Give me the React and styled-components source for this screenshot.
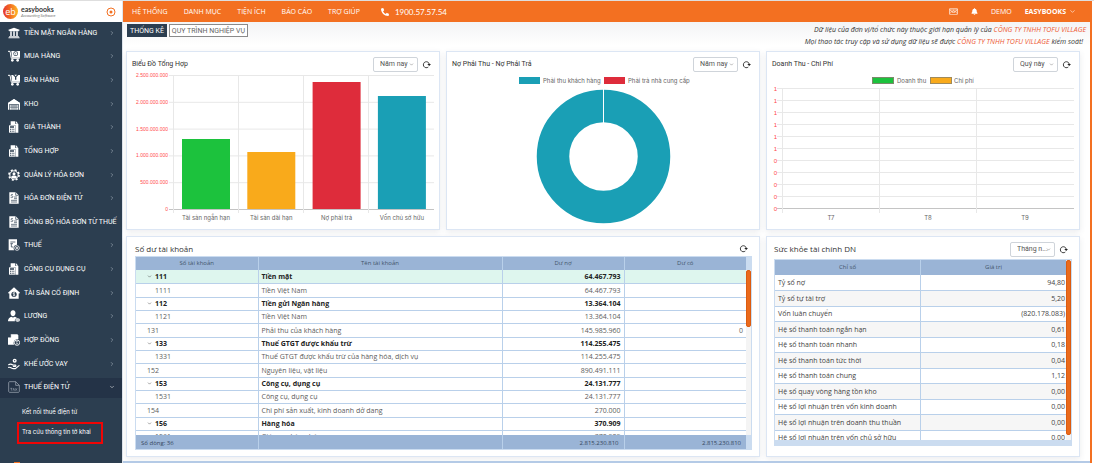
import React from "react";
import styled, { createGlobalStyle, css } from "styled-components";
import { FaUniversity, FaPhoneAlt, FaBell, FaRegKeyboard } from "react-icons/fa";
import { FiChevronDown, FiChevronRight } from "react-icons/fi";

const color = {
  navy: "#2c3e50",
  navyDark: "#243347",
  orange: "#f37021",
  frame: "#dce6f4",
  line: "#b9d0ea",
  head: "#9ab4d6",
  pale: "#cbdcf0",
  green: "#1cc23d",
  amber: "#f9aa1b",
  red: "#de2c3b",
  teal: "#1a9fb5",
};

const font = {
  narrow: 'Roboto, "Open Sans", sans-serif',
  small: 'Inter, "Open Sans", sans-serif',
  brand: 'Lato, "Open Sans", sans-serif',
};

const Global = createGlobalStyle`
  *, *::before, *::after { box-sizing: border-box; }
  body {
    margin: 0;
    background: #fff;
    font-family: "Open Sans", "Noto Sans", sans-serif;
    font-size: 7px;
    line-height: 10px;
    color: #444;
  }
  a { color: inherit; text-decoration: none; }
  button, select { font: inherit; }
`;

const Page = styled.div`
  display: flex;
  min-height: 462px;
  border-top: 1px solid #dedede;
  overflow: hidden;
`;

/* ---------- sidebar ---------- */

const Sidebar = styled.aside`
  flex: 0 0 123px;
  min-width: 0;
  display: flex;
  flex-direction: column;
  background: ${color.navy};
  border-right: 1px solid #dfe5ec;
  color: #fff;
`;

const Brand = styled.div`
  display: flex;
  align-items: center;
  gap: 3px;
  height: 21px;
  padding: 0 6px 0 3px;
  background: #fff;
`;

const BrandMark = styled.span`
  display: grid;
  place-items: center;
  width: 15px;
  height: 15px;
  border-radius: 50%;
  background: linear-gradient(90deg, #e5352f, #f37021 50%, #fdb827);
  color: #fff;
  font-size: 9px;
  line-height: 12px;
`;

const BrandText = styled.span`
  flex: 1;
  display: flex;
  flex-direction: column;
  color: #333;
  font-family: ${font.brand};
  font-weight: 700;
  font-size: 7px;
  line-height: 7px;
`;

const BrandSub = styled.small`
  font-size: 4px;
  line-height: 5px;
  font-weight: 400;
  font-style: italic;
  color: #777;
  white-space: nowrap;
`;

const PinButton = styled.button`
  display: grid;
  padding: 0;
  border: 0;
  background: none;
`;

const Nav = styled.nav`
  display: grid;
  grid-template-columns: minmax(0, 1fr);
  grid-auto-rows: 1fr;
  height: 378px;
  font-family: ${font.narrow};
`;

const NavItem = styled.a`
  display: flex;
  align-items: center;
  gap: 4px;
  margin: 2px 0;
  padding: 0 7px 2px 8px;
  white-space: nowrap;
  background: ${(p) => (p.$active ? color.navyDark : "transparent")};
  svg { flex: none; }
`;

const NavLabel = styled.span`
  flex: 1;
  min-width: 0;
`;

const SubMenu = styled.div`
  display: flex;
  flex-direction: column;
  align-items: flex-start;
  padding: 3px 0 0 17px;
  font-family: ${font.small};
  font-size: 6px;
`;

const SubLink = styled.a`
  padding: 4px 5px 5px 5px;
  white-space: nowrap;
  ${(p) =>
    p.$marked &&
    css`
      align-self: stretch;
      margin-right: 19px;
      border: 2px solid #f00505;
      padding: 3px 0 5px 3px;
    `}
`;

const SideFoot = styled.div`
  margin-top: auto;
  height: 1px;
  width: 6px;
  margin-left: 14px;
  background: ${color.orange};
`;

/* ---------- top bar ---------- */

const Main = styled.main`
  flex: 1;
  min-width: 0;
  display: flex;
  flex-direction: column;
  margin-right: 2px;
  border-right: 2px solid ${color.orange};
  background: linear-gradient(#f3f4f5, #fff 24px);
  background-position: 0 21px;
  background-repeat: no-repeat;
`;

const TopBar = styled.header`
  display: flex;
  align-items: center;
  justify-content: space-between;
  height: 21px;
  padding: 0 14px 0 9px;
  background: ${color.orange};
  color: #fff;
  white-space: nowrap;
`;

const TopGroup = styled.div`
  display: flex;
  align-items: center;
  gap: ${(p) => p.$gap}px;
`;

const Phone = styled.a`
  display: flex;
  align-items: center;
  gap: 6px;
  margin-left: 5px;
  font-family: ${font.brand};
  font-size: 8px;
`;

const Account = styled.a`
  display: flex;
  align-items: center;
  gap: 3px;
  font-weight: ${(p) => (p.$strong ? 700 : 400)};
`;

const SubBar = styled.div`
  display: flex;
  justify-content: space-between;
  height: 29px;
  padding: 2px 4px 0 4px;
`;

const Tabs = styled.div`
  display: flex;
  align-items: flex-start;
  gap: 2px;
  font-family: ${font.narrow};
`;

const Tab = styled.button`
  height: 13px;
  padding: 0 2px;
  line-height: 10px;
  white-space: nowrap;
  border: 1px solid ${(p) => (p.$active ? color.navy : "#8a8a8a")};
  background: ${(p) => (p.$active ? color.navy : "#fff")};
  color: ${(p) => (p.$active ? "#fff" : "#666")};
`;

const Notice = styled.div`
  font-style: italic;
  line-height: 12px;
  text-align: right;
  color: #333;
  p { margin: 0; }
  p + p { padding-right: 3px; }
  em { color: #ee5a35; }
`;

/* ---------- cards ---------- */

const Board = styled.div`
  display: grid;
  grid-template-columns: repeat(3, 1fr);
  gap: 6px;
  padding: 0 10px 4px 3px;
`;

const Card = styled.section`
  min-width: 0;
  grid-column: span ${(p) => p.$span || 1};
  background: #fff;
  border: 1px solid ${color.frame};
  box-shadow: 0 2px 6px rgba(60, 70, 90, 0.1);
`;

const CardHead = styled.div`
  display: flex;
  align-items: center;
  height: ${(p) => p.$height || 20}px;
  padding: ${(p) => p.$pad || "4px 8px 0 5px"};
`;

const CardTitle = styled.h2`
  flex: 1;
  margin: 0;
  font-family: ${(p) => (p.$large ? "inherit" : font.narrow)};
  font-size: ${(p) => (p.$large ? 8 : 7)}px;
  font-weight: 400;
  color: #333;
`;

const SelectBox = styled.label`
  display: grid;
  align-items: center;
  width: 45px;
  height: 15px;
  margin-right: 4px;
  border: 1px solid #cfd4da;
  border-radius: 2px;
  background: #fff;
  select, svg { grid-area: 1 / 1; }
  svg { justify-self: end; margin-right: 3px; pointer-events: none; }
`;

const Select = styled.select`
  appearance: none;
  width: 100%;
  padding: 0 0 0 6px;
  border: 0;
  background: none;
  color: #555;
  font-family: ${font.narrow};
`;

const IconButton = styled.button`
  display: grid;
  padding: 0;
  border: 0;
  background: none;
  color: #222;
`;

const Chart = styled.svg`
  display: block;
  width: 100%;
  height: auto;
  overflow: visible;
  font-family: ${font.small};
  font-size: 6px;
  fill: #666;
`;

const Tick = styled.text`
  font-family: "Liberation Sans", sans-serif;
  font-size: ${(p) => p.$size}px;
  fill: #ff4a4a;
  text-anchor: end;
`;

/* ---------- tables ---------- */

const Frame = styled.div`
  display: grid;
  grid-template-columns: minmax(0, 1fr) 5px;
  margin: 0 7px 6px 8px;
  border: 1px solid ${color.pale};
  background: ${color.pale};
`;

const Viewport = styled.div`
  height: ${(p) => p.$height}px;
  overflow: hidden;
  background: #fff;
`;

const Table = styled.table`
  width: 100%;
  border-collapse: collapse;
  table-layout: fixed;
  th, td { padding: 0 3px; line-height: 9px; overflow: hidden; white-space: nowrap; text-align: left; }
  td + td, th + th { border-left: 1px solid ${color.line}; }
`;

const HeadRow = styled.tr`
  height: ${(p) => p.$height}px;
  background: ${color.head};
  th { text-align: center; font-size: 6px; font-weight: 400; color: #43546b; }
`;

const AccountRow = styled.tr`
  height: 13px;
  &:nth-child(3n + 2) { height: 14px; }
  border-bottom: 1px solid ${color.line};
  background: ${(p) => (p.$active ? "#def6ee" : "#fff")};
  font-weight: ${(p) => (p.$group ? 700 : 400)};
  color: ${(p) => (p.$group ? "#222" : "#5c5c5c")};
  td:nth-child(n + 3) { text-align: right; }
`;

const Code = styled.span`
  display: flex;
  align-items: center;
  gap: 3px;
  padding-left: ${(p) => [8, 16, 8][p.$level]}px;
`;

const FootTable = styled(Table)`
  background: ${color.head};
  height: 14px;
  font-size: 6px;
  color: #34465c;
  td { padding: 2px 5px 0 5px; }
  td:nth-child(n + 3) { text-align: right; }
`;

const RatioRow = styled.tr`
  height: 15px;
  border-bottom: 1px solid ${color.line};
  &:nth-child(even) { height: 16px; background: #f6f6f6; }
  td:last-child { text-align: right; padding-right: 1px; }
`;

const Track = styled.div`
  padding-top: ${(p) => p.$offset}px;
  background: linear-gradient(${color.pale} ${(p) => p.$offset}px, #f4f4f4 ${(p) => p.$offset}px);
`;

const Thumb = styled.div`
  height: ${(p) => p.$height}px;
  border-radius: 2px;
  background: #ea6a1c;
  border: 1px solid #dc5c10;
`;

const BottomStrip = styled.div`
  height: 2px;
  margin-top: auto;
  background: #b4cae6;
`;

/* ---------- icons ---------- */

const Glyph = ({ children }) => (
  <svg width="12" height="12" viewBox="0 0 36 36" fill="#fff" aria-hidden="true">
    {children}
  </svg>
);
const D = color.navy;

const CartBase = () => (
  <>
    <path d="M0 4h6l4 21h25" fill="none" stroke="#fff" strokeWidth="3" />
    <circle cx="13" cy="31" r="4" />
    <circle cx="29" cy="31" r="4" />
  </>
);
const CartIn = () => (
  <Glyph>
    <CartBase />
    <path d="M10 3h26v20H12z" />
    <circle cx="23" cy="11" r="7" fill={D} />
    <circle cx="23" cy="11" r="5" />
    <circle cx="23" cy="11" r="1.500" fill={D} />
  </Glyph>
);
const CartOut = () => (
  <Glyph>
    <CartBase />
    <path d="M10 3h26v20H12z" />
    <path d="M15 3h16l-8 8zM21 9h4v8h-4z" fill={D} />
    <path d="M19 2h8l-4 5z" />
  </Glyph>
);
const Warehouse = () => (
  <Glyph>
    <path d="M0 15 18 3l18 12v20h-4V17H4v18H0z" />
    <path d="M0 15 18 3l18 12v3H0z" />
    <path d="M6 20h24v15H6z" />
    <path d="M6 24h24M6 29h24M12 20v15M18 20v15M24 20v15" stroke={D} strokeWidth="1.6" />
  </Glyph>
);
const Ledger = () => (
  <Glyph>
    <path d="M8 1h14v8h9v26h-9V12H8z" />
    <path d="M24 1l7 7h-7z" />
    <path d="M3 13h18v22H3z" />
    <path d="M6 16h12v4H6zM6 23h3v3H6zm5 0h3v3h-3zm5 0h3v3h-3zM6 29h3v3H6zm5 0h3v3h-3zm5 0h3v3h-3z" fill={D} />
  </Glyph>
);
const GearUser = () => (
  <Glyph>
    <circle cx="18" cy="18" r="15" fill="none" stroke="#fff" strokeWidth="5" strokeDasharray="6 5.8" />
    <circle cx="18" cy="18" r="12.5" fill="none" stroke="#fff" strokeWidth="3" />
    <circle cx="18" cy="14" r="4.5" />
    <path d="M9 25c1-7 17-7 18 0l-4 3H13z" />
  </Glyph>
);
const Invoice = () => (
  <Glyph>
    <path d="M4 1h19l9 9v25H4z" />
    <path d="M23 1v9h9" fill="none" stroke={D} strokeWidth="2" />
    <path d="M15 8c-5-3-9 3-3 4s2 7-4 4M18 15h9M18 20h9M9 25h18M9 30h18" fill="none" stroke={D} strokeWidth="2" />
  </Glyph>
);
const TaxSheet = () => (
  <Glyph>
    <path d="M2 1h25v16c-8 0-13 9-8 17H2z" />
    <path d="M7 9h15M7 14h8M10 14v10h6" fill="none" stroke={D} strokeWidth="2.2" />
    <circle cx="27" cy="27" r="7" fill="none" stroke="#fff" strokeWidth="2.4" />
    <path d="m24 24 6 6m0-6-6 6" stroke="#fff" strokeWidth="2.2" />
  </Glyph>
);
const HomeCoin = () => (
  <Glyph>
    <path d="M18 1 36 17l-3 3-1-1v16H4V19l-1 1-3-3z" />
    <circle cx="18" cy="22" r="8" fill={D} />
    <path d="M21 18c-5-2-8 2-3 4s2 6-3 3M18 15v13" fill="none" stroke="#fff" strokeWidth="2" />
  </Glyph>
);
const UserCoin = () => (
  <Glyph>
    <path d="M15 1c11 0 9 18 0 18S4 1 15 1z" />
    <path d="M0 34c0-10 6-12 10-14 3 3 7 3 10 0 4 1 7 3 8 5-6 0-9 5-7 9z" />
    <ellipse cx="29" cy="30" rx="7" ry="5" />
    <path d="M24 30h10" stroke={D} strokeWidth="1.6" />
  </Glyph>
);
const Contract = () => (
  <Glyph>
    <path d="M8 1h20l3 3v12c-9-2-17 6-13 16H0V9h8z" />
    <path d="M8 1v9H0" fill="none" stroke={D} strokeWidth="1.6" />
    <circle cx="27" cy="26" r="8" fill="none" stroke="#fff" strokeWidth="2.6" />
    <path d="M30 22c-5-2-7 2-3 4s2 5-3 3" fill="none" stroke="#fff" strokeWidth="2" />
  </Glyph>
);
const HandCoin = () => (
  <Glyph>
    <circle cx="20" cy="8" r="6" />
    <circle cx="20" cy="8" r="2" fill={D} />
    <path d="M2 20c6-4 10-1 13 1h7c2 0 2 4 0 4h-6M2 28c8-1 8 4 14 4h6l11-9" fill="none" stroke="#fff" strokeWidth="3.400" strokeLinecap="round" />
  </Glyph>
);
const TaxFile = () => (
  <Glyph>
    <path d="M6 2h17l11 11v17c0 3-1 4-4 4H6c-3 0-4-1-4-4V6c0-3 1-4 4-4zM23 2v11h11" fill="none" stroke="#aab4bf" strokeWidth="2" />
    <path d="M7 22h6M10 22v7M15 29l2-7 3 7M22 22l5 7m0-7-5 7" fill="none" stroke="#aab4bf" strokeWidth="1.6" />
  </Glyph>
);

const Refresh = () => (
  <svg width="9" height="9" viewBox="0 0 27 27" aria-hidden="true">
    <path d="M19 21a9 9 0 1 1 3-8" fill="none" stroke="currentColor" strokeWidth="2.6" />
    <path d="M16 12h11l-5.500 6z" fill="currentColor" />
  </svg>
);

/* ---------- data ---------- */

const menu = [
  ["TIỀN MẶT NGÂN HÀNG", () => <FaUniversity size={12} />],
  ["MUA HÀNG", CartIn],
  ["BÁN HÀNG", CartOut],
  ["KHO", Warehouse],
  ["GIÁ THÀNH", Ledger],
  ["TỔNG HỢP", Ledger],
  ["QUẢN LÝ HÓA ĐƠN", GearUser],
  ["HÓA ĐƠN ĐIỆN TỬ", Invoice],
  ["ĐỒNG BỘ HÓA ĐƠN TỪ THUẾ", Invoice],
  ["THUẾ", TaxSheet],
  ["CÔNG CỤ DỤNG CỤ", Ledger],
  ["TÀI SẢN CỐ ĐỊNH", HomeCoin],
  ["LƯƠNG", UserCoin],
  ["HỢP ĐỒNG", Contract],
  ["KHẾ ƯỚC VAY", HandCoin],
  ["THUẾ ĐIỆN TỬ", TaxFile],
];

const accounts = [
  ["111", "Tiền mặt", "64.467.793", "", "group"],
  ["1111", "Tiền Việt Nam", "64.467.793", "", "child"],
  ["112", "Tiền gửi Ngân hàng", "13.364.104", "", "group"],
  ["1121", "Tiền Việt Nam", "13.364.104", "", "child"],
  ["131", "Phải thu của khách hàng", "145.985.960", "0", "plain"],
  ["133", "Thuế GTGT được khấu trừ", "114.255.475", "", "group"],
  ["1331", "Thuế GTGT được khấu trừ của hàng hóa, dịch vụ", "114.255.475", "", "child"],
  ["152", "Nguyên liệu, vật liệu", "890.491.111", "", "plain"],
  ["153", "Công cụ, dụng cụ", "24.131.777", "", "group"],
  ["1531", "Công cụ, dụng cụ", "24.131.777", "", "child"],
  ["154", "Chi phí sản xuất, kinh doanh dở dang", "270.000", "", "plain"],
  ["156", "Hàng hóa", "370.909", "", "group"],
  ["1561", "Giá mua hàng hóa", "370.909", "", "child"],
];

const ratios = [
  ["Tỷ số nợ", "94,80"],
  ["Tỷ số tự tài trợ", "5,20"],
  ["Vốn luân chuyển", "(820.178.083)"],
  ["Hệ số thanh toán ngắn hạn", "0,61"],
  ["Hệ số thanh toán nhanh", "0,18"],
  ["Hệ số thanh toán tức thời", "0,04"],
  ["Hệ số thanh toán chung", "1,12"],
  ["Hệ số quay vòng hàng tồn kho", "0,00"],
  ["Hệ số lợi nhuận trên vốn kinh doanh", "0,00"],
  ["Hệ số lợi nhuận trên doanh thu thuần", "0,00"],
  ["Hệ số lợi nhuận trên vốn chủ sở hữu", "0,00"],
];

/* ---------- parts ---------- */

const Period = ({ value, label }) => (
  <SelectBox>
    <Select aria-label={label} defaultValue={value}>
      <option>{value}</option>
    </Select>
    <FiChevronDown size={5} color="#555" />
  </SelectBox>
);

const Reload = () => (
  <IconButton aria-label="Tải lại">
    <Refresh />
  </IconButton>
);

const bars = [
  ["Tài sản ngắn hạn", 67, color.green],
  ["Tài sản dài hạn", 80, color.amber],
  ["Nợ phải trả", 10, color.red],
  ["Vốn chủ sở hữu", 24, color.teal],
];
const barScale = ["2.500.000.000", "2.000.000.000", "1.500.000.000", "1.000.000.000", "500.000.000", "0"];

const BarChart = () => (
  <Chart viewBox="0 0 312 157">
    {barScale.map((t, i) => (
      <g key={t}>
        <path d={`M42 ${3.5 + i * 26.8}H307`} stroke={i === 5 ? "#c4c4c4" : "#e8e8e8"} />
        <Tick x="41" y={5 + i * 26.8} $size={5}>{t}</Tick>
      </g>
    ))}
    {bars.map(([t, top, fill], i) => (
      <g key={t}>
        <path d={`M${46.5 + i * 65} 3V141`} stroke="#e8e8e8" />
        <rect x={55 + i * 65.3} y={top} width="48" height={137 - top} fill={fill} />
        <text x={79 + i * 65.3} y="148" textAnchor="middle">{t}</text>
      </g>
    ))}
  </Chart>
);

const DonutChart = () => (
  <Chart viewBox="0 0 312 157">
    <rect x="72" y="5" width="21" height="7" fill={color.teal} />
    <text x="96" y="11">Phải thu khách hàng</text>
    <rect x="157" y="5" width="21" height="7" fill={color.red} />
    <text x="181" y="11">Phải trả nhà cung cấp</text>
    <circle cx="156.500" cy="84.500" r="50.500" fill="none" stroke={color.teal} strokeWidth="32.500" />
    <path d="M156.500 17v35" stroke="#fff" strokeWidth="1" />
  </Chart>
);

const LineChart = () => (
  <Chart viewBox="0 0 312 157">
    <rect x="105.500" y="5.500" width="21" height="6" fill={color.green} stroke="#7a8a6a" />
    <text x="130" y="11">Doanh thu</text>
    <rect x="163.500" y="5.500" width="21" height="6" fill={color.amber} stroke="#a08a5a" />
    <text x="187" y="11">Chi phí</text>
    {Array.from({ length: 11 }, (_, i) => (
      <g key={i}>
        <path d={`M10 ${16.5 + i * 12}H307`} stroke={i === 10 ? "#c4c4c4" : "#e8e8e8"} />
        <Tick x="10" y={19 + i * 12} $size={6}>{i < 6 ? "1" : "0"}</Tick>
      </g>
    ))}
    {["T7", "T8", "T9"].map((t, i) => (
      <g key={t}>
        <path d={`M${15.5 + i * 97} 16V141`} stroke="#e8e8e8" />
        <text x={64 + i * 97} y="148" textAnchor="middle">{t}</text>
      </g>
    ))}
  </Chart>
);

const ChartCard = ({ title, period, children }) => (
  <Card>
    <CardHead>
      <CardTitle>{title}</CardTitle>
      <Period value={period} label={title} />
      <Reload />
    </CardHead>
    {children}
  </Card>
);

const AccountCols = () => (
  <colgroup>
    <col style={{ width: "20%" }} />
    <col style={{ width: "40%" }} />
    <col style={{ width: "20%" }} />
    <col style={{ width: "20%" }} />
  </colgroup>
);

const AccountTable = () => (
  <Frame>
    <Viewport $height={178}>
      <Table>
        <AccountCols />
        <thead>
          <HeadRow $height={13}>
            <th>Số tài khoản</th>
            <th>Tên tài khoản</th>
            <th>Dư nợ</th>
            <th>Dư có</th>
          </HeadRow>
        </thead>
        <tbody>
          {accounts.map(([code, name, debit, credit, kind], i) => (
            <AccountRow key={code} $group={kind === "group"} $active={i === 0}>
              <td>
                <Code $level={kind === "group" ? 0 : kind === "child" ? 1 : 2}>
                  {kind === "group" && <FiChevronDown size={5} />}
                  {code}
                </Code>
              </td>
              <td>{name}</td>
              <td>{debit}</td>
              <td>{credit}</td>
            </AccountRow>
          ))}
        </tbody>
      </Table>
    </Viewport>
    <Track $offset={13}>
      <Thumb $height={57} />
    </Track>
    <FootTable>
      <AccountCols />
      <tbody>
        <tr>
          <td>Số dòng: 36</td>
          <td />
          <td>2.815.230.810</td>
          <td>2.815.230.810</td>
        </tr>
      </tbody>
    </FootTable>
  </Frame>
);

const RatioFrame = styled(Frame)`
  margin: 0 7px 8px 7px;
  padding-bottom: 5px;
`;

const RatioTable = () => (
  <RatioFrame>
    <Viewport $height={180}>
      <Table>
        <thead>
          <HeadRow $height={15}>
            <th>Chỉ số</th>
            <th>Giá trị</th>
          </HeadRow>
        </thead>
        <tbody>
          {ratios.map(([name, value]) => (
            <RatioRow key={name}>
              <td>{name}</td>
              <td>{value}</td>
            </RatioRow>
          ))}
        </tbody>
      </Table>
    </Viewport>
    <Track $offset={0}>
      <Thumb $height={175} />
    </Track>
  </RatioFrame>
);

export default function App() {
  return (
    <>
      <Global />
      <Page>
        <Sidebar>
          <Brand>
            <BrandMark>eb</BrandMark>
            <BrandText>
              easybooks
              <BrandSub>Accounting Software</BrandSub>
            </BrandText>
            <PinButton aria-label="Ghim menu">
              <svg width="10" height="10" viewBox="0 0 20 20">
                <circle cx="10" cy="10" r="8" fill="none" stroke={color.orange} strokeWidth="2" />
                <circle cx="10" cy="10" r="3" fill={color.orange} />
              </svg>
            </PinButton>
          </Brand>
          <Nav>
            {menu.map(([label, Icon], i) => {
              const active = i === menu.length - 1;
              return (
                <NavItem href="#" key={label} $active={active}>
                  <Icon />
                  <NavLabel>{label}</NavLabel>
                  {active ? <FiChevronDown size={6} /> : <FiChevronRight size={6} color="#b8c2cc" />}
                </NavItem>
              );
            })}
          </Nav>
          <SubMenu>
            <SubLink href="#">Kết nối thuế điện tử</SubLink>
            <SubLink href="#" $marked>Tra cứu thông tin tờ khai</SubLink>
          </SubMenu>
          <SideFoot />
        </Sidebar>

        <Main>
          <TopBar>
            <TopGroup $gap={16}>
              <a href="#">HỆ THỐNG</a>
              <a href="#">DANH MỤC</a>
              <a href="#">TIỆN ÍCH</a>
              <a href="#">BÁO CÁO</a>
              <a href="#">TRỢ GIÚP</a>
              <Phone href="#">
                <FaPhoneAlt size={8} />
                1900.57.57.54
              </Phone>
            </TopGroup>
            <TopGroup $gap={13}>
              <FaRegKeyboard size={9} />
              <FaBell size={7} />
              <Account href="#">DEMO</Account>
              <Account href="#" $strong>
                EASYBOOKS
                <FiChevronDown size={7} />
              </Account>
            </TopGroup>
          </TopBar>

          <SubBar>
            <Tabs>
              <Tab $active>THỐNG KÊ</Tab>
              <Tab>QUY TRÌNH NGHIỆP VỤ</Tab>
            </Tabs>
            <Notice>
              <p>
                Dữ liệu của đơn vị/tổ chức này thuộc giới hạn quản lý của <em>CÔNG TY TNHH TOFU VILLAGE</em>
              </p>
              <p>
                Mọi thao tác truy cập và sử dụng dữ liệu sẽ được <em>CÔNG TY TNHH TOFU VILLAGE</em> kiểm soát!
              </p>
            </Notice>
          </SubBar>

          <Board>
            <ChartCard title="Biểu Đồ Tổng Hợp" period="Năm nay">
              <BarChart />
            </ChartCard>
            <ChartCard title="Nợ Phải Thu - Nợ Phải Trả" period="Năm nay">
              <DonutChart />
            </ChartCard>
            <ChartCard title="Doanh Thu - Chi Phí" period="Quý này">
              <LineChart />
            </ChartCard>
            <Card $span={2}>
              <CardHead $height={19} $pad="4px 11px 0 8px">
                <CardTitle $large>Số dư tài khoản</CardTitle>
                <Reload />
              </CardHead>
              <AccountTable />
            </Card>
            <Card>
              <CardHead $height={22} $pad="2px 11px 0 7px">
                <CardTitle $large>Sức khỏe tài chính DN</CardTitle>
                <Period value="Tháng n..." label="Kỳ báo cáo" />
                <Reload />
              </CardHead>
              <RatioTable />
            </Card>
          </Board>
          <BottomStrip />
        </Main>
      </Page>
    </>
  );
}
